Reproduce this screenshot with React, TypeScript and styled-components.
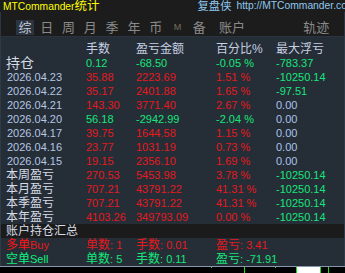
import React from 'react'
import styled, { createGlobalStyle } from 'styled-components'

const GlobalStyle = createGlobalStyle`
  html, body { margin: 0; padding: 0; background: #1c1c1c; }
`

const RED = '#e41a1e'
const GREEN = '#17e57a'
const BLUE = '#a9c3ea'

type Tone = 'red' | 'green' | 'blue'
const toneColor = (t: Tone) => (t === 'red' ? RED : t === 'green' ? GREEN : BLUE)

const Root = styled.div`
  width: 345px;
  height: 273px;
  overflow: hidden;
  background: #1c1c1c;
  font-family: 'Liberation Sans', 'Noto Sans CJK SC', sans-serif;
  display: flex;
  flex-direction: column;
`

const TitleBar = styled.div`
  height: 12px;
  display: flex;
  align-items: center;
  padding-left: 3px;
  white-space: nowrap;
  overflow: hidden;
`

const AppName = styled.span`
  color: #ffff00;
  font-size: 10.3px;
  line-height: 12px;
`

const Cjk = styled.span<{ $size?: number }>`
  font-size: ${(p) => p.$size ?? 12.5}px;
`

const Brand = styled.span`
  margin-left: 98px;
  color: #8fc8ee;
  font-size: 11.3px;
  line-height: 12px;
`

const Url = styled.span`
  margin-left: 5px;
  color: #8fc8ee;
  font-size: 10.3px;
  line-height: 12px;
`

const TabBar = styled.div`
  height: 25px;
  box-sizing: border-box;
  display: flex;
  align-items: flex-end;
  padding: 0 0 1px 13px;
  border-left: 1px solid #2c3643;
  border-right: 1px solid #2c3643;
  border-bottom: 1px solid #2a3340;
`

const Tab = styled.div<{ $wide?: boolean; $end?: boolean }>`
  width: ${(p) => (p.$wide ? 43.6 : 21.8)}px;
  height: 15px;
  display: flex;
  justify-content: center;
  margin-left: ${(p) => (p.$end ? 'auto' : '0')};
  margin-right: ${(p) => (p.$end ? '6px' : '0')};
`

const TabLabel = styled.span<{ $active?: boolean; $small?: boolean }>`
  display: block;
  height: 15px;
  padding: 0 2.5px;
  font-size: ${(p) => (p.$small ? 9 : 13)}px;
  line-height: 15px;
  color: ${(p) => (p.$active ? '#c4ccd8' : p.$small ? '#7a6e60' : '#8a8a8a')};
  background: ${(p) => (p.$active ? '#2b3440' : 'transparent')};
`

const Panel = styled.div`
  flex: 1;
  background: #252d37;
  border-left: 1px solid #2f3a48;
  border-right: 1px solid #2f3a48;
  padding-top: 5px;
  display: flex;
  flex-direction: column;
`

const Row = styled.div<{ $band?: boolean }>`
  height: 14px;
  display: grid;
  grid-template-columns: 80px 50px 80px 60px 1fr;
  padding-left: 5px;
  align-items: center;
  background: ${(p) => (p.$band ? '#1b1b1b' : 'transparent')};
  white-space: nowrap;
`

const Label = styled.span<{ $size?: number; $color?: string }>`
  font-size: ${(p) => p.$size ?? 12}px;
  line-height: 14px;
  color: ${(p) => p.$color ?? '#d6dce6'};
`

const Head = styled.span`
  font-size: 12px;
  line-height: 14px;
  color: #c6d0e2;
`

const DateText = styled.span`
  font-size: 11px;
  line-height: 14px;
  color: #b4c6e2;
  padding-left: 1px;
`

const Val = styled.span<{ $tone: Tone }>`
  font-size: 11px;
  line-height: 14px;
  color: ${(p) => toneColor(p.$tone)};
`

const Stat = styled.span<{ $color: string }>`
  font-size: 11px;
  line-height: 14px;
  color: ${(p) => p.$color};
`

const Strip = styled.svg`
  display: block;
  flex: none;
`

type Cell = [string, Tone]
type DataRow = { label: string; date?: boolean; big?: boolean; cells: Cell[] }

const r = (v: string): Cell => [v, 'red']
const g = (v: string): Cell => [v, 'green']
const b = (v: string): Cell => [v, 'blue']

const rows: DataRow[] = [
  { label: '持仓', big: true, cells: [g('0.12'), g('-68.50'), g('-0.05 %'), g('-783.37')] },
  { label: '2026.04.23', date: true, cells: [r('35.88'), r('2223.69'), r('1.51 %'), g('-10250.14')] },
  { label: '2026.04.22', date: true, cells: [r('35.17'), r('2401.88'), r('1.65 %'), g('-97.51')] },
  { label: '2026.04.21', date: true, cells: [r('143.30'), r('3771.40'), r('2.67 %'), b('0.00')] },
  { label: '2026.04.20', date: true, cells: [g('56.18'), g('-2942.99'), g('-2.04 %'), b('0.00')] },
  { label: '2026.04.17', date: true, cells: [r('39.75'), r('1644.58'), r('1.15 %'), b('0.00')] },
  { label: '2026.04.16', date: true, cells: [r('23.77'), r('1031.19'), r('0.73 %'), b('0.00')] },
  { label: '2026.04.15', date: true, cells: [r('19.15'), r('2356.10'), r('1.69 %'), b('0.00')] },
  { label: '本周盈亏', cells: [r('270.53'), r('5453.98'), r('3.78 %'), g('-10250.14')] },
  { label: '本月盈亏', cells: [r('707.21'), r('43791.22'), r('41.31 %'), g('-10250.14')] },
  { label: '本季盈亏', cells: [r('707.21'), r('43791.22'), r('41.31 %'), g('-10250.14')] },
  { label: '本年盈亏', cells: [r('4103.26'), r('349793.09'), r('0.00 %'), g('-10250.14')] },
]

const tabs = ['综', '日', '周', '月', '季', '年', '币', 'M', '备']

export default function App() {
  return (
    <Root>
      <GlobalStyle />
      <TitleBar>
        <AppName>
          MTCommander<Cjk>统计</Cjk>
        </AppName>
        <Brand>复盘侠</Brand>
        <Url>http://MTCommander.com</Url>
      </TitleBar>

      <TabBar>
        {tabs.map((t, i) => (
          <Tab key={t}>
            <TabLabel $active={i === 0} $small={t === 'M'}>
              {t}
            </TabLabel>
          </Tab>
        ))}
        <Tab $wide>
          <TabLabel>账户</TabLabel>
        </Tab>
        <Tab $wide $end>
          <TabLabel>轨迹</TabLabel>
        </Tab>
      </TabBar>

      <Panel>
        <Row>
          <span />
          <Head>手数</Head>
          <Head>盈亏金额</Head>
          <Head>百分比%</Head>
          <Head>最大浮亏</Head>
        </Row>
        {rows.map((row, i) => (
          <Row key={i}>
            {row.date ? (
              <DateText>{row.label}</DateText>
            ) : (
              <Label $size={row.big ? 14 : 12}>{row.label}</Label>
            )}
            {row.cells.map(([v, tone], j) => (
              <Val key={j} $tone={tone}>
                {v}
              </Val>
            ))}
          </Row>
        ))}
        <Row $band>
          <Label>账户持仓汇总</Label>
        </Row>
        <Row>
          <Label $color="#ff1414">
            多单<Stat $color={RED}>Buy</Stat>
          </Label>
          <Label $color={RED}>
            单数<Stat $color={RED}>: 1</Stat>
          </Label>
          <Label $color={RED}>
            手数<Stat $color={RED}>: 0.01</Stat>
          </Label>
          <Label $color={RED}>
            盈亏<Stat $color={RED}>: 3.41</Stat>
          </Label>
        </Row>
        <Row>
          <Label $color="#10f07e">
            空单<Stat $color="#10f07e">Sell</Stat>
          </Label>
          <Label $color={GREEN}>
            单数<Stat $color={GREEN}>: 5</Stat>
          </Label>
          <Label $color={GREEN}>
            手数<Stat $color={GREEN}>: 0.11</Stat>
          </Label>
          <Label $color={GREEN}>
            盈亏<Stat $color={GREEN}>: -71.91</Stat>
          </Label>
        </Row>
      </Panel>

      <Strip width="345" height="7" viewBox="0 0 345 7">
        <rect x="0" y="0" width="345" height="7" fill="#000" />
        <rect x="0" y="0" width="345" height="1" fill="#8696ac" />
        <rect x="211" y="1" width="1" height="1" fill="#19e019" />
        <rect x="244" y="1" width="1" height="6" fill="#19e019" />
        <rect x="275" y="1" width="1" height="1" fill="#19e019" />
        <rect x="296" y="1" width="1" height="6" fill="#19e019" />
        <rect x="297" y="1" width="23" height="6" fill="#ffffff" />
        <rect x="320" y="1" width="1" height="6" fill="#19e019" />
        <rect x="328" y="1" width="1" height="6" fill="#19e019" />
      </Strip>
    </Root>
  )
}
